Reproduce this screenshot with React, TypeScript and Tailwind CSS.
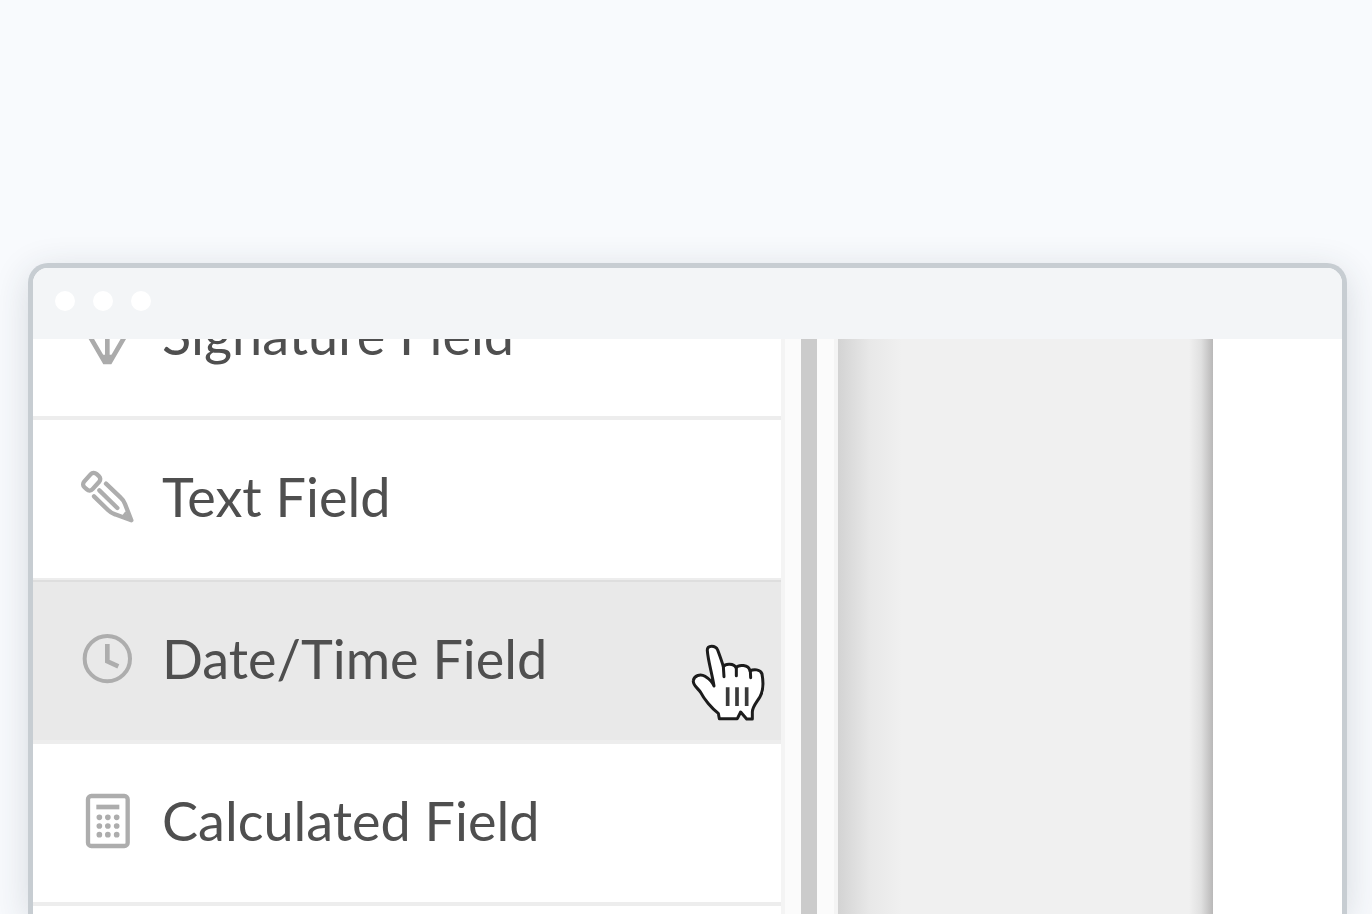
import type { ReactNode } from 'react';
import clsx from 'clsx';

interface FieldOption {
  label: string;
  icon: ReactNode;
  active?: boolean;
}

const iconClass = 'size-[54px] shrink-0 overflow-visible';

function NibIcon() {
  return (
    <svg viewBox="210 174 162 162" className={iconClass} fill="none" stroke="#ababab" strokeWidth="14" aria-hidden="true">
      <path d="M270 196h44l30 64-44 76h-16l-44-76z" />
      <path d="M292 256v70" />
      <circle cx="292" cy="246" r="10" />
      <path d="M278 314h28l-3 28h-22z" fill="#ababab" stroke="none" />
    </svg>
  );
}

function PencilIcon() {
  return (
    <svg viewBox="60 60 162 162" className={iconClass} fill="none" stroke="#adadad" strokeWidth="13" strokeLinecap="round" strokeLinejoin="round" aria-hidden="true">
      <rect x="68" y="78" width="54" height="34" rx="12" transform="rotate(-48 95 95)" />
      <path d="M138 101l44 42q9 8 13 19l19 49-49-18q-12-4-21-13l-42-41" />
      <path d="M118 121l54 53" />
      <path d="M196 184l20 30-32-14z" fill="#adadad" stroke="none" />
    </svg>
  );
}

function ClockIcon() {
  return (
    <svg viewBox="60 63 162 162" className={iconClass} fill="none" stroke="#adadad" aria-hidden="true">
      <circle cx="142" cy="143" r="68" strokeWidth="12" />
      <path d="M142 99v52l33 15" strokeWidth="14" />
    </svg>
  );
}

function CalculatorIcon() {
  return (
    <svg viewBox="60 70 162 162" className={iconClass} fill="none" stroke="#adadad" aria-hidden="true">
      <rect x="84" y="76" width="119" height="150" rx="10" strokeWidth="13" />
      <path d="M109 109h69" strokeWidth="14" />
      <path d="M118 140h.1M143.500 140h.1M170 140h.1M118 166h.1M143.500 166h.1M170 166h.1M118 192h.1M143.500 192h.1M170 192h.1" strokeWidth="17" strokeLinecap="round" />
    </svg>
  );
}

function HandCursor() {
  return (
    <svg
      viewBox="60 39 228 240"
      className="pointer-events-none absolute top-[61px] right-[15px] h-20 w-[76px]"
      fill="#fff"
      stroke="#1c1c1c"
      strokeWidth="9"
      strokeLinejoin="round"
      strokeLinecap="round"
      aria-hidden="true"
    >
      <path d="M112 62Q111 49 125 49Q138 49 143 60C149 76 156 95 160 110C166 100 192 100 198 113C206 103 236 103 240 123C250 117 272 117 276 132C281 160 280 183 270 200C260 217 247 230 247 246V267H230L212 246L202 266H148L145 250C125 235 102 207 92 187C82 173 68 165 70 152C72 136 92 131 105 139C118 147 127 156 132 168C126 130 114 92 112 62Z" />
      <path d="M160 110l2 30M199 113v24M241 123l1 20" />
      <path d="M173 172v56M201 172v56M230 172v56" stroke="#3a3a3a" strokeWidth="11" strokeLinecap="butt" />
    </svg>
  );
}

const fields: FieldOption[] = [
  { label: 'Signature Field', icon: <NibIcon /> },
  { label: 'Text Field', icon: <PencilIcon /> },
  { label: 'Date/Time Field', icon: <ClockIcon />, active: true },
  { label: 'Calculated Field', icon: <CalculatorIcon /> },
];

function FieldList() {
  return (
    <ul className="-mt-[81px] min-w-0 flex-1">
      {fields.map((field) => (
        <li
          key={field.label}
          className={clsx(
            'relative h-[162px] border-b-4 border-[#ededed]',
            field.active && 'bg-[#e9e9e9] shadow-[0_-2px_0_#dedede]',
          )}
        >
          <button
            type="button"
            className="flex h-full w-full items-center gap-7 pb-1 pl-[47px] text-left text-[54px] leading-[64px] whitespace-nowrap text-[#4f4f4f]"
          >
            {field.icon}
            {field.label}
          </button>
          {field.active && <HandCursor />}
        </li>
      ))}
    </ul>
  );
}

export default function App() {
  return (
    <main className="flex h-screen flex-col overflow-hidden bg-[#f8fafd] pt-[263px] pr-[25px] pl-7 font-['Lato',sans-serif]">
      <section className="flex min-h-0 flex-1 flex-col overflow-hidden rounded-t-[20px] border-5 border-b-0 border-[#c7cdd2] bg-white shadow-[0_8px_36px_rgba(40,50,60,0.16)]">
        <header className="flex h-[71px] shrink-0 items-center gap-[18px] bg-[#f3f5f7] pb-1.5 pl-[22px]">
          <span className="size-5 rounded-full bg-white" />
          <span className="size-5 rounded-full bg-white" />
          <span className="size-5 rounded-full bg-white" />
        </header>
        <div className="flex min-h-0 flex-1 overflow-hidden">
          <FieldList />
          <div className="flex w-[57px] shrink-0 border-x-4 border-x-[#f4f4f4] bg-[#fbfbfb] pl-4">
            <div className="w-4 bg-[#cbcbcb]" />
          </div>
          <div className="flex w-[375px] shrink-0 justify-between bg-[#f0f0f0]">
            <div className="w-16 bg-linear-to-r from-[#d3d3d3] via-[#e8e8e8] to-[#f0f0f0]" />
            <div className="w-6 bg-linear-to-r from-[#f0f0f0] via-[#e0e0e0] to-[#b9b8b8]" />
          </div>
          <div className="w-[129px] shrink-0 bg-white" />
        </div>
      </section>
    </main>
  );
}
